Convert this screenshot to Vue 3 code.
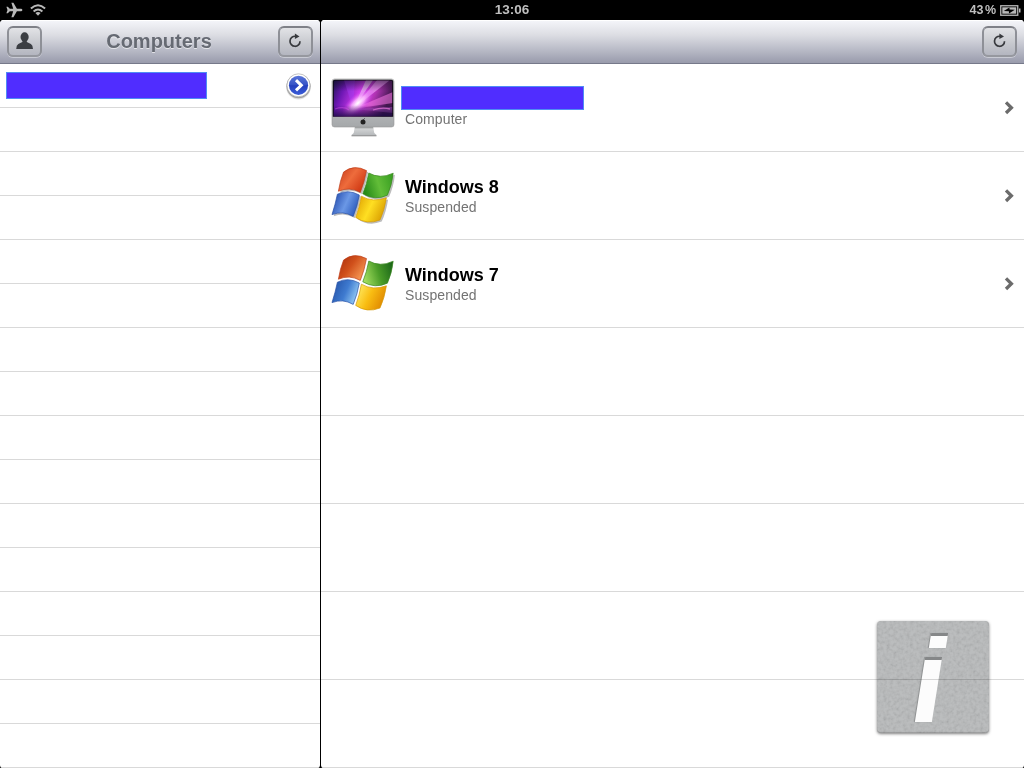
<template>
  <div class="screen">
    <div class="status-bar">
      <div class="status-left">
        <svg class="plane" width="17" height="16" viewBox="0 0 17 16">
          <path d="M16.4 8 C16.4 7.1 15.4 6.8 14.5 6.8 H10.9 L7.4 0.8 H5.4 L7.2 6.8 H3.8 L1.8 4.8 H0.4 L1.5 8 L0.4 11.2 H1.8 L3.8 9.2 H7.2 L5.4 15.2 H7.4 L10.9 9.2 H14.5 C15.4 9.2 16.4 8.9 16.4 8 Z" fill="#b9b9b9" />
        </svg>
        <svg class="wifi" width="16" height="12" viewBox="0 0 16 12">
          <g fill="none" stroke="#b9b9b9" stroke-width="2">
            <path d="M0.9 4.5 Q8 -2 15.1 4.5" />
            <path d="M3.6 7.4 Q8 3.5 12.4 7.4" />
          </g>
          <path d="M5.4 9 Q8 6.9 10.6 9 L8 11.8 Z" fill="#b9b9b9" />
        </svg>
      </div>
      <span class="clock">13:06</span>
      <div class="status-right">
        <span>43 %</span>
        <svg width="21" height="11" viewBox="0 0 21 11">
          <rect x="0.75" y="0.75" width="17" height="9.5" fill="none" stroke="#b9b9b9" stroke-width="1.3" />
          <path d="M19 3.4 H20.5 V7.6 H19 Z" fill="#b9b9b9" />
          <rect x="2.3" y="2.3" width="13.9" height="6.4" fill="#b9b9b9" />
          <path d="M3.8 6.1 L9.4 2.4 L9.6 4.6 L14.8 4.7 L9 8.6 L8.9 6.3 Z" fill="#000" />
        </svg>
      </div>
    </div>

    <div class="panes">
      <section class="pane master">
        <header class="toolbar">
          <button class="tool-btn">
            <svg width="18" height="18" viewBox="0 0 18 18">
              <ellipse cx="8.6" cy="4.9" rx="4.1" ry="4.6" fill="#3b3e43" />
              <path d="M6.4 8 H10.8 V10.1 L14.9 12.1 Q16.8 13.3 17 17 H0.2 Q0.4 13.3 2.3 12.1 L6.4 10.1 Z" fill="#3b3e43" />
            </svg>
          </button>
          <h1>Computers</h1>
          <button class="tool-btn">
            <svg width="14" height="16" viewBox="0 0 14 16">
              <path d="M7.5 3.3 A5 5 0 1 0 12 8.2" fill="none" stroke="#37393d" stroke-width="1.7" />
              <path d="M6.9 0.4 L11.5 3.4 L6.9 6.1 Z" fill="#37393d" />
            </svg>
          </button>
        </header>
        <ul class="list">
          <li class="short-row">
            <span class="name-block wide"></span>
            <svg class="disclosure" width="30" height="32" viewBox="0 0 30 32">
              <defs>
                <linearGradient id="disclosure-fill" x1="0" y1="0" x2="0" y2="1">
                  <stop offset="0" stop-color="#5a76d8" />
                  <stop offset="0.48" stop-color="#3552c6" />
                  <stop offset="0.52" stop-color="#243fbd" />
                  <stop offset="1" stop-color="#3b5ed8" />
                </linearGradient>
              </defs>
              <circle cx="15.5" cy="17" r="12.4" fill="#000" opacity="0.12" />
              <circle cx="15.5" cy="16.3" r="12" fill="#777" opacity="0.6" />
              <circle cx="15.5" cy="15.3" r="11.5" fill="#fff" stroke="#aaa" stroke-width="0.7" />
              <circle cx="15.5" cy="15.3" r="9.6" fill="url(#disclosure-fill)" />
              <path d="M13 10.2 L18.3 15.3 L13 20.4" fill="none" stroke="#fff" stroke-width="3" />
            </svg>
          </li>
          <li v-for="n in 15" :key="n" class="short-row"></li>
        </ul>
      </section>

      <section class="pane detail">
        <header class="toolbar end">
          <button class="tool-btn">
            <svg width="14" height="16" viewBox="0 0 14 16">
              <path d="M7 3.3 A5 5 0 1 0 11.5 8.2" fill="none" stroke="#37393d" stroke-width="1.7" />
              <path d="M6.4 0.4 L11 3.4 L6.4 6.1 Z" fill="#37393d" />
            </svg>
          </button>
        </header>
        <ul class="list">
          <li v-for="item in machines" :key="item.id" class="tall-row">
            <svg v-if="item.id === 'mac'" class="thumb" width="64" height="64" viewBox="0 0 64 64">
              <defs>
                <linearGradient id="nebula" x1="0" y1="0" x2="1" y2="0.25">
                  <stop offset="0" stop-color="#1c1550" />
                  <stop offset="0.22" stop-color="#6d17b4" />
                  <stop offset="0.5" stop-color="#d03cec" />
                  <stop offset="0.75" stop-color="#b134b4" />
                  <stop offset="1" stop-color="#43184f" />
                </linearGradient>
                <radialGradient id="glow">
                  <stop offset="0" stop-color="#fff" />
                  <stop offset="0.4" stop-color="#fcb4ff" stop-opacity="0.85" />
                  <stop offset="1" stop-color="#d22bf0" stop-opacity="0" />
                </radialGradient>
                <linearGradient id="screen-shade" x1="0" y1="0" x2="0" y2="1">
                  <stop offset="0" stop-color="#0c0b1c" stop-opacity="0.55" />
                  <stop offset="0.3" stop-color="#0c0b1c" stop-opacity="0" />
                  <stop offset="0.68" stop-color="#160a40" stop-opacity="0" />
                  <stop offset="1" stop-color="#160a40" stop-opacity="0.85" />
                </linearGradient>
                <linearGradient id="alu" x1="0" y1="0" x2="0" y2="1">
                  <stop offset="0" stop-color="#d2d4d5" />
                  <stop offset="1" stop-color="#a5a8aa" />
                </linearGradient>
                <linearGradient id="stand" x1="0" y1="0" x2="0" y2="1">
                  <stop offset="0" stop-color="#777a7c" />
                  <stop offset="0.3" stop-color="#d0d2d3" />
                  <stop offset="0.85" stop-color="#b8bbbd" />
                  <stop offset="1" stop-color="#777" />
                </linearGradient>
                <clipPath id="screen-clip">
                  <rect x="2.8" y="4.7" width="58.4" height="35.6" />
                </clipPath>
              </defs>
              <path d="M24 50 H42 L43.3 57 L45.5 59 V60.3 H20.5 V59 L22.7 57 Z" fill="url(#stand)" />
              <rect x="1" y="3" width="62" height="48" rx="2.5" fill="url(#alu)" stroke="#999" stroke-width="0.6" />
              <path d="M1.8 40.8 V5.5 Q1.8 3.7 3.6 3.7 H60.4 Q62.2 3.7 62.2 5.5 V40.8 Z" fill="#09090e" />
              <g clip-path="url(#screen-clip)">
                <rect x="2" y="4" width="60" height="37" fill="url(#nebula)" />
                <path d="M22 33 L13 4 H24 Z" fill="#a43df5" opacity="0.45" />
                <path d="M22 33 L35 4 H42 Z" fill="#fff" opacity="0.5" />
                <path d="M22 33 L46 4 H59 Z" fill="#f5a5fa" opacity="0.65" />
                <path d="M22 33 L62 16 V27 Z" fill="#f778e6" opacity="0.55" />
                <path d="M22 33 L62 31 V37 Z" fill="#db6cf0" opacity="0.4" />
                <ellipse cx="27" cy="27" rx="21" ry="9" fill="url(#glow)" transform="rotate(-43 27 27)" />
                <rect x="2" y="4" width="60" height="37" fill="url(#screen-shade)" />
                <path d="M4 33 Q13 30 18 34" fill="none" stroke="#de4ff1" stroke-width="1.3" opacity="0.45" />
                <path d="M42 34 Q51 31 59 33" fill="none" stroke="#ff82e9" stroke-width="1.3" opacity="0.6" />
              </g>
              <circle cx="32" cy="46" r="2.5" fill="#222" />
              <path d="M32.4 43.7 L33.6 42.6" stroke="#222" />
            </svg>

            <svg v-else class="thumb" width="64" height="64" viewBox="0 0 64 64">
              <defs>
                <linearGradient :id="item.id + '-red'" x1="0" y1="0" x2="1" y2="0.65">
                  <stop v-for="(c, i) in item.red" :key="i" :offset="i / 2" :stop-color="c" />
                </linearGradient>
                <linearGradient :id="item.id + '-green'" x1="0" y1="0.5" x2="1" y2="0.25">
                  <stop v-for="(c, i) in item.green" :key="i" :offset="i / 2" :stop-color="c" />
                </linearGradient>
                <linearGradient :id="item.id + '-blue'" x1="0" y1="0.3" x2="1" y2="0.7">
                  <stop v-for="(c, i) in item.blue" :key="i" :offset="i / 2" :stop-color="c" />
                </linearGradient>
                <linearGradient :id="item.id + '-yellow'" x1="0" y1="0.15" x2="1" y2="0.55">
                  <stop v-for="(c, i) in item.yellow" :key="i" :offset="i / 2" :stop-color="c" />
                </linearGradient>
              </defs>
              <g v-if="item.shadow" fill="#bdbdbd" transform="translate(1.7 1.6)">
                <path v-for="pane in flagPanes" :key="pane.color" :d="pane.d" />
              </g>
              <path
                v-for="pane in flagPanes"
                :key="pane.color"
                :d="pane.d"
                :fill="`url(#${item.id}-${pane.color})`"
                :stroke="pane.edge"
                stroke-width="0.7"
              />
            </svg>

            <div class="info" :class="{ redacted: !item.name }">
              <strong v-if="item.name">{{ item.name }}</strong>
              <span v-else class="name-block"></span>
              <small>{{ item.status }}</small>
            </div>
            <svg class="chevron" width="11" height="14" viewBox="0 0 11 14">
              <path d="M2 1.4 L7.4 6.7 L2 12" fill="none" stroke="#6b6b6b" stroke-width="3.3" />
            </svg>
          </li>
          <li v-for="n in 5" :key="n" class="tall-row"></li>
        </ul>
      </section>
    </div>

    <div class="watermark">
      <svg class="grain" width="112" height="113">
        <filter id="grain">
          <feTurbulence type="fractalNoise" baseFrequency="0.3" numOctaves="2" seed="4" />
          <feColorMatrix values="1.6 0 0 0 -0.1  1.6 0 0 0 -0.1  1.6 0 0 0 -0.1  0 0 0 0 0.12" />
        </filter>
        <rect width="112" height="113" filter="url(#grain)" />
      </svg>
      <span class="mark dot"></span>
      <span class="mark stem"></span>
    </div>
  </div>
</template>

<script setup>
const machines = [
  { id: 'mac', name: '', status: 'Computer' },
  {
    id: 'win8',
    name: 'Windows 8',
    status: 'Suspended',
    shadow: true,
    red: ['#c63818', '#ee6c3c', '#cf3712'],
    green: ['#268a18', '#62bd38', '#399f22'],
    blue: ['#244cae', '#6b98e6', '#2453b7'],
    yellow: ['#dfa100', '#ffdf22', '#d99e00']
  },
  {
    id: 'win7',
    name: 'Windows 7',
    status: 'Suspended',
    shadow: false,
    red: ['#a72c0b', '#d0501b', '#f79a55'],
    green: ['#a1dc5e', '#4a9c28', '#1b6619'],
    blue: ['#2454a9', '#3f7bd0', '#a2d7fa'],
    yellow: ['#fff06b', '#f9bd12', '#df8700']
  }
];

// the four wavy panes of the flag, clockwise from top left
const flagPanes = [
  { color: 'red', edge: '#bd3c18', d: 'M12.6 8 Q23 0 35.5 6.6 Q33.5 18 29.3 28.4 Q18.5 22.4 7.4 27.2 Q9 17 12.6 8 Z' },
  { color: 'green', edge: '#3b861f', d: 'M37.8 9 Q49 15.4 62.2 9.2 Q61 21 56.4 31.2 Q44 37 31.8 29.8 Q35.8 20 37.8 9 Z' },
  { color: 'yellow', edge: '#d49a08', d: 'M30.4 32.2 Q42 38.8 55.4 33.8 Q53.6 46 49 56 Q36 61.2 24.7 53.4 Q28.6 43 30.4 32.2 Z' },
  { color: 'blue', edge: '#2850a6', d: 'M6.4 30.2 Q17 24.8 28.3 31 Q26.5 42 22.2 52.4 Q12 46.4 1 50.6 Q4.4 40 6.4 30.2 Z' }
];
</script>

<style>
body {
  background: #000;
}
</style>

<style scoped>
.screen {
  position: relative;
  width: 1024px;
  height: 768px;
  overflow: hidden;
  background: #000;
  font-family: "Liberation Sans", Arial, sans-serif;
}

.status-bar {
  display: grid;
  grid-template-columns: 1fr auto 1fr;
  align-items: center;
  height: 20px;
  color: #bfbfbf;
  font-size: 13.5px;
  font-weight: bold;
  line-height: 20px;
}

.status-left,
.status-right {
  display: flex;
  align-items: center;
}

.status-left {
  gap: 7px;
  padding-left: 6px;
}

.status-right {
  justify-content: flex-end;
  gap: 4px;
  padding-right: 3px;
  font-size: 12.5px;
  word-spacing: -2px;
}

.panes {
  display: flex;
  gap: 1px;
  height: 748px;
}

.pane {
  display: flex;
  flex-direction: column;
  overflow: hidden;
  border-radius: 4px 4px 3px 3px;
  background: #fff;
}

.master {
  width: 320px;
}

.detail {
  flex: 1;
}

.toolbar {
  display: flex;
  flex: none;
  align-items: center;
  justify-content: space-between;
  box-sizing: border-box;
  height: 44px;
  padding: 0 7px 1px;
  border-bottom: 1px solid #76798a;
  background: linear-gradient(#f5f6fa, #dcdde3 35%, #b8bac6 70%, #999bac);
  box-shadow: inset 0 1px #fff;
}

.toolbar.end {
  justify-content: flex-end;
}

.toolbar h1 {
  margin: 0 2px 0 0;
  color: #666a73;
  font-size: 20px;
  line-height: 24px;
  text-shadow: 0 1px rgba(255, 255, 255, 0.6);
}

.tool-btn {
  display: flex;
  align-items: center;
  justify-content: center;
  box-sizing: border-box;
  width: 35px;
  height: 31px;
  padding: 0;
  border: 2px solid #85878e;
  border-color: #7f8188 #8e9097 #96989f;
  border-radius: 6px;
  background: linear-gradient(#e2e3e6, #c5c7cd 60%, #b4b6c0);
  box-shadow: 0 1px rgba(255, 255, 255, 0.4);
}

.list {
  margin: 0;
  padding: 0;
  list-style: none;
}

.short-row,
.tall-row {
  display: flex;
  align-items: center;
  box-sizing: border-box;
  border-bottom: 1px solid #d9d9d9;
}

.short-row {
  justify-content: space-between;
  height: 44px;
  padding: 0 7px 0 6px;
}

.tall-row {
  height: 88px;
  padding: 0 9px 0 10px;
}

.name-block {
  box-sizing: border-box;
  width: 183px;
  height: 24px;
  margin-left: -4px;
  border: 1px solid #4f8df5;
  background: #502dff;
}

.name-block.wide {
  width: 201px;
  height: 27px;
  margin: 0;
}

.thumb {
  flex: none;
}

.info {
  display: flex;
  flex: 1;
  flex-direction: column;
  margin-left: 10px;
}

.info.redacted {
  padding-bottom: 2px;
}

.info strong {
  font-size: 18px;
  line-height: 22px;
}

.info small {
  color: #737373;
  font-size: 14px;
  line-height: 18px;
  letter-spacing: 0.1px;
}

/* floats over the lower corner of the list, the row line shows through */
.watermark {
  position: absolute;
  top: 621px;
  left: 877px;
  width: 112px;
  height: 112px;
  overflow: hidden;
  border-radius: 4px;
  background: #b2b4b5;
  box-shadow: 0 1px 3px rgba(0, 0, 0, 0.5), inset 0 -1px 1px rgba(0, 0, 0, 0.2);
  mix-blend-mode: multiply;
}

.grain {
  display: block;
}

.mark {
  position: absolute;
  box-sizing: border-box;
  border-top: 3px solid #858788;
  background: #fcfcfc;
  box-shadow: -1px 0 1px #8d8f90;
  transform: skewX(-9deg);
}

.mark.dot {
  top: 12px;
  left: 53px;
  width: 17px;
  height: 15px;
}

.mark.stem {
  top: 36px;
  left: 43px;
  width: 17px;
  height: 65px;
}
</style>
